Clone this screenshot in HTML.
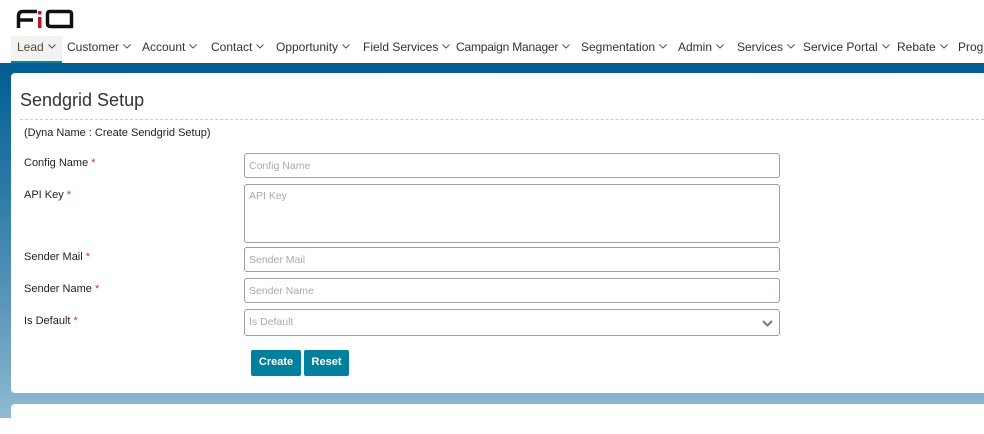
<!DOCTYPE html>
<html><head><style>
*{box-sizing:border-box;margin:0;padding:0}
body{width:984px;height:418px;overflow:hidden;position:relative;font-family:"Liberation Sans",sans-serif;background:#fff}
.bg{position:absolute;left:0;top:63px;width:984px;height:355px;background:linear-gradient(180deg,#025d92 0%,#2a7aa6 35%,#5e98bb 70%,#8fbad2 100%)}
.nav{position:absolute;top:37px;height:26px;font-size:12px;color:#333;line-height:20px}
.nav span{position:absolute;top:0;white-space:nowrap}
.nav svg{margin-left:4px;vertical-align:2px}
.lead{position:absolute;left:11px;top:36px;width:51px;height:27px;background:#f2f2f2;border-bottom:2px solid #0c7f9a}
.card{position:absolute;left:11px;top:73px;width:990px;height:320px;background:#fff;border-radius:4px}
.card2{position:absolute;left:11px;top:404px;width:990px;height:30px;background:#fff;border-radius:4px}
h1{position:absolute;left:20px;top:90px;font-size:18px;font-weight:normal;color:#333}
.hr{position:absolute;left:20px;top:119px;width:964px;border-top:1px dashed #ccc}
.t{position:absolute;font-size:11px;color:#222}
.t b{color:#c33;font-weight:normal}
.in{position:absolute;left:244px;width:536px;border:1px solid #9aa0a6;border-radius:3px;font-size:10.5px;color:#aaa;padding:5px 4px}
.btn{position:absolute;top:350px;height:26px;background:#00809c;color:#fff;font-size:11px;font-weight:bold;text-align:center;line-height:24px;border-radius:2px}
</style></head><body>
<svg style="position:absolute;left:16px;top:9px" width="58" height="20" viewBox="0 0 58 20">
<path d="M2.5 19V7Q2.5 2.5 7 2.5H21" stroke="#111" stroke-width="3.5" fill="none"/>
<path d="M3 11H17" stroke="#111" stroke-width="3.5"/>
<rect x="22" y="2" width="3.5" height="3.5" fill="#c0141c"/>
<rect x="22" y="8" width="3.5" height="11" fill="#c0141c"/>
<path d="M34 2.5H53Q55.5 2.5 55.5 5V17.5H35Q31.5 17.5 31.5 14.5V5Q31.5 2.5 34 2.5Z" stroke="#111" stroke-width="3.5" fill="none"/>
</svg>
<div class="lead"></div>
<div class="nav">
<span style="left:17px;color:#5a4a30">Lead<svg width="8" height="5"><path d="M.5.5L4 4 7.5.5" stroke="#555" fill="none"/></svg></span>
<span style="left:67px">Customer<svg width="8" height="5"><path d="M.5.5L4 4 7.5.5" stroke="#555" fill="none"/></svg></span>
<span style="left:142px">Account<svg width="8" height="5"><path d="M.5.5L4 4 7.5.5" stroke="#555" fill="none"/></svg></span>
<span style="left:211px">Contact<svg width="8" height="5"><path d="M.5.5L4 4 7.5.5" stroke="#555" fill="none"/></svg></span>
<span style="left:276px">Opportunity<svg width="8" height="5"><path d="M.5.5L4 4 7.5.5" stroke="#555" fill="none"/></svg></span>
<span style="left:363px">Field Services<svg width="8" height="5"><path d="M.5.5L4 4 7.5.5" stroke="#555" fill="none"/></svg></span>
<span style="left:456px;letter-spacing:-0.2px">Campaign Manager<svg width="8" height="5"><path d="M.5.5L4 4 7.5.5" stroke="#555" fill="none"/></svg></span>
<span style="left:581px">Segmentation<svg width="8" height="5"><path d="M.5.5L4 4 7.5.5" stroke="#555" fill="none"/></svg></span>
<span style="left:678px">Admin<svg width="8" height="5"><path d="M.5.5L4 4 7.5.5" stroke="#555" fill="none"/></svg></span>
<span style="left:737px">Services<svg width="8" height="5"><path d="M.5.5L4 4 7.5.5" stroke="#555" fill="none"/></svg></span>
<span style="left:803px">Service Portal<svg width="8" height="5"><path d="M.5.5L4 4 7.5.5" stroke="#555" fill="none"/></svg></span>
<span style="left:897px">Rebate<svg width="8" height="5"><path d="M.5.5L4 4 7.5.5" stroke="#555" fill="none"/></svg></span>
<span style="left:958px">Progr</span>
</div>
<div class="bg"></div>
<div class="card"></div>
<div class="card2"></div>
<h1>Sendgrid Setup</h1>
<div class="hr"></div>
<div class="t" style="left:24px;top:127px">(Dyna Name : Create Sendgrid Setup)</div>
<div class="t" style="left:24px;top:157px">Config Name <b>*</b></div>
<div class="t" style="left:24px;top:189px">API Key <b>*</b></div>
<div class="t" style="left:24px;top:251px">Sender Mail <b>*</b></div>
<div class="t" style="left:24px;top:283px">Sender Name <b>*</b></div>
<div class="t" style="left:24px;top:315px">Is Default <b>*</b></div>
<div class="in" style="top:153px;height:25px;padding-top:6px">Config Name</div>
<div class="in" style="top:184px;height:59px">API Key</div>
<div class="in" style="top:247px;height:25px;padding-top:6px">Sender Mail</div>
<div class="in" style="top:278px;height:25px;padding-top:6px">Sender Name</div>
<div class="in" style="top:309px;height:27px;padding-top:6px">Is Default<svg style="position:absolute;right:6px;top:10px" width="11" height="7"><path d="M1 1L5.5 5.5L10 1" stroke="#777" stroke-width="2" fill="none"/></svg></div>
<div class="btn" style="left:251px;width:50px">Create</div>
<div class="btn" style="left:304px;width:45px">Reset</div>
</body></html>
